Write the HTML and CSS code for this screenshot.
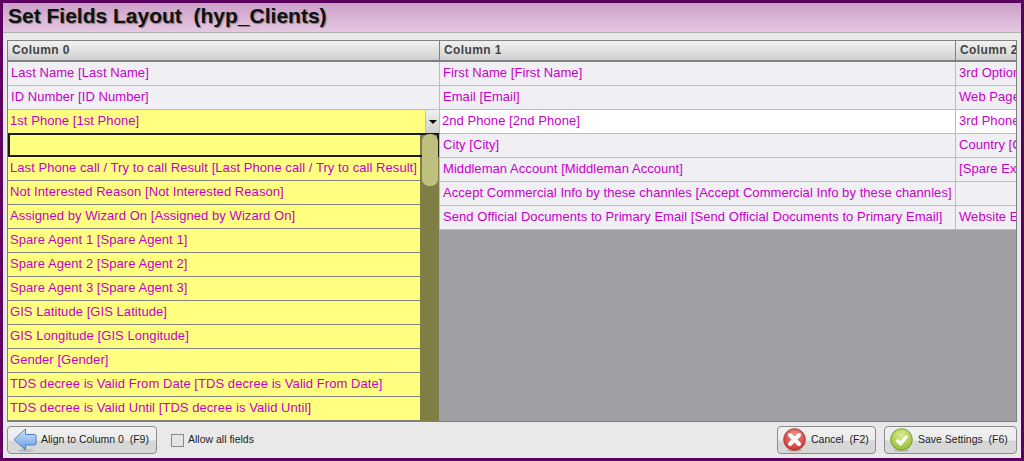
FILE: index.html
```html
<!DOCTYPE html>
<html lang="en">
<head>
<meta charset="utf-8">
<title>Set Fields Layout</title>
<link rel="stylesheet" href="styles.css">
</head>
<body>
<div class="window">
  <h1 class="title">Set Fields Layout&nbsp; (hyp_Clients)</h1>
  <main class="content">
    <div class="grid">
      <div class="row head">
        <div class="cell c0">Column 0</div>
        <div class="cell c1">Column 1</div>
        <div class="cell c2">Column 2</div>
      </div>
      <div class="row">
        <div class="cell c0">Last Name [Last Name]</div>
        <div class="cell c1">First Name [First Name]</div>
        <div class="cell c2">3rd Option [3rd Option]</div>
      </div>
      <div class="row">
        <div class="cell c0">ID Number [ID Number]</div>
        <div class="cell c1">Email [Email]</div>
        <div class="cell c2">Web Page [Web Page]</div>
      </div>
      <div class="row current">
        <div class="cell c0 combo"><span class="combo-text">1st Phone [1st Phone]</span><span class="combo-btn"><i class="arrow"></i></span></div>
        <div class="cell c1">2nd Phone [2nd Phone]</div>
        <div class="cell c2">3rd Phone [3rd Phone]</div>
      </div>
      <div class="row">
        <div class="cell c0"></div>
        <div class="cell c1">City [City]</div>
        <div class="cell c2">Country [Country]</div>
      </div>
      <div class="row">
        <div class="cell c0"></div>
        <div class="cell c1">Middleman Account [Middleman Account]</div>
        <div class="cell c2">[Spare Extra]</div>
      </div>
      <div class="row">
        <div class="cell c0"></div>
        <div class="cell c1">Accept Commercial Info by these channles [Accept Commercial Info by these channles]</div>
        <div class="cell c2"></div>
      </div>
      <div class="row">
        <div class="cell c0"></div>
        <div class="cell c1">Send Official Documents to Primary Email [Send Official Documents to Primary Email]</div>
        <div class="cell c2">Website Email</div>
      </div>
      <div class="dropdown">
        <div class="list">
          <div class="item selected"></div>
          <div class="item">Last Phone call / Try to call Result [Last Phone call / Try to call Result]</div>
          <div class="item">Not Interested Reason [Not Interested Reason]</div>
          <div class="item">Assigned by Wizard On [Assigned by Wizard On]</div>
          <div class="item">Spare Agent 1 [Spare Agent 1]</div>
          <div class="item">Spare Agent 2 [Spare Agent 2]</div>
          <div class="item">Spare Agent 3 [Spare Agent 3]</div>
          <div class="item">GIS Latitude [GIS Latitude]</div>
          <div class="item">GIS Longitude [GIS Longitude]</div>
          <div class="item">Gender [Gender]</div>
          <div class="item">TDS decree is Valid From Date [TDS decree is Valid From Date]</div>
          <div class="item">TDS decree is Valid Until [TDS decree is Valid Until]</div>
        </div>
        <div class="track"><div class="thumb"></div></div>
      </div>
    </div>
    <footer class="footer">
      <button class="btn align" type="button">
        <svg width="24" height="24" viewBox="0 0 24 24"><defs><linearGradient id="ga" x1="0" y1="0" x2="0" y2="1"><stop offset="0" stop-color="#d8e8fa"/><stop offset="1" stop-color="#5f9ae6"/></linearGradient></defs><ellipse cx="13" cy="22.5" rx="8" ry="1.4" fill="#bbb"/><path d="M1 11.5 L12.5 1 L12.5 6.5 L21.5 6.5 Q23 6.5 23 8 L23 15.5 Q23 17 21.5 17 L12.5 17 L12.5 22 Z" fill="url(#ga)" stroke="#4a7fc8"/></svg>
        <span class="label">Align to Column 0&nbsp; (F9)</span>
      </button>
      <label class="check"><span class="box"></span><span class="label">Allow all fields</span></label>
      <button class="btn cancel" type="button">
        <svg width="23" height="24" viewBox="0 0 23 24"><defs><radialGradient id="gr" cx="0.5" cy="0.3" r="0.75"><stop offset="0" stop-color="#f09088"/><stop offset="1" stop-color="#c8302c"/></radialGradient></defs><ellipse cx="11.5" cy="22.5" rx="8" ry="1.3" fill="#bbb"/><circle cx="11.5" cy="11.5" r="10.8" fill="url(#gr)" stroke="#a83a36"/><path d="M7 7 L16 16 M16 7 L7 16" stroke="#fff" stroke-width="4" stroke-linecap="round"/></svg>
        <span class="label">Cancel&nbsp; (F2)</span>
      </button>
      <button class="btn save" type="button">
        <svg width="23" height="24" viewBox="0 0 23 24"><defs><radialGradient id="gg" cx="0.5" cy="0.3" r="0.75"><stop offset="0" stop-color="#dcec90"/><stop offset="1" stop-color="#90b830"/></radialGradient></defs><ellipse cx="11.5" cy="22.5" rx="8" ry="1.3" fill="#bbb"/><circle cx="11.5" cy="11.5" r="10.8" fill="url(#gg)" stroke="#80a030"/><path d="M6.5 12 L10.5 15.5 L17 8" fill="none" stroke="#fff" stroke-width="3.4"/></svg>
        <span class="label">Save Settings&nbsp; (F6)</span>
      </button>
    </footer>
  </main>
</div>
</body>
</html>
```
FILE: styles.css
```css
* { box-sizing: border-box; }
html, body { margin: 0; height: 100%; overflow: hidden; }
body { font-family: "Liberation Sans", Arial, sans-serif; }
.window {
  width: 1024px; height: 461px;
  border: 3px solid #5c005f;
  background: #e9e9e9;
  display: flex; flex-direction: column;
}
.title {
  margin: 0; height: 30px; padding: 1px 0 0 5px;
  font-size: 21px; line-height: 24px; font-weight: bold; color: #111;
  background: linear-gradient(#cb9fc8, #e6c8e2);
  border-bottom: 1px solid #b0b0b0;
  text-shadow: 1px 1px 1px #777;
  white-space: pre;
}
.content { flex: 1; padding: 7px 4px 0 4px; display: flex; flex-direction: column; min-height: 0; }
.grid {
  position: relative; height: 382px; width: 1010px; overflow: hidden;
  border: 1px solid #808080; background: #a09fa4;
}
.row { display: flex; height: 24px; font-size: 13px; letter-spacing: 0.06px; line-height: 22px; color: #c800c8; }
.cell {
  flex: none; height: 24px; padding-left: 3px; overflow: hidden; white-space: nowrap;
  background: #efeff4;
  border-bottom: 1px solid #bcbcc4; border-right: 1px solid #bcbcc4;
}
.c0 { width: 432px; }
.c1 { width: 516px; }
.c2 { width: 62px; border-right: 0; }
.row.head { height: 21px; font-size: 12px; letter-spacing: 0.4px; }
.head .cell {
  height: 21px; padding-left: 4px; line-height: 19px; font-weight: bold; color: #444;
  background: linear-gradient(#f2f2f2, #cfcfcf);
  border-bottom: 2px solid #808080; border-right: 1px solid #808080;
}
.head .c2 { border-right: 0; }
.current .cell { background: #fff; }
.current .c1 { padding-left: 2px; }
.current .combo {
  display: flex; padding: 0 0 0 2px; background: #ffff80;
  border-bottom: 1px solid #333;
}
.combo-text { flex: 1; }
.combo-btn {
  width: 14px; flex: none; display: flex; align-items: center; justify-content: center;
  background: linear-gradient(#f0f0f0, #cfcfcf);
  border-left: 1px solid #c0c0c0;
}
.arrow { width: 0; height: 0; border: 4px solid transparent; border-top: 4px solid #000; border-bottom: 0; }
.dropdown {
  position: absolute; left: 0; top: 92px; width: 431px; height: 288px;
  display: flex; background: #ffff80;
}
.list { flex: 1; min-width: 0; }
.item {
  height: 24px; padding-left: 2px; font-size: 13px; letter-spacing: 0.06px; line-height: 21px; color: #c800c8;
  border-bottom: 1px solid #808080; white-space: nowrap;
}
.item.selected { border: 2px solid #1a1a1a; width: 431px; position: relative; z-index: 2; }
.track { width: 19px; flex: none; background: #7f7f45; padding: 1px 1px 0 2px; }
.thumb { position: relative; z-index: 3; height: 52px; border-radius: 7px; background: #bfbf80; }
.footer { display: flex; align-items: center; height: 36px; padding: 0; font-size: 10.5px; color: #222; }
.btn {
  display: flex; align-items: center; height: 28px; padding: 0 0 0 5px; gap: 4px; white-space: nowrap;
  font: 10.5px "Liberation Sans", Arial, sans-serif; color: #222;
  border: 1px solid #8c8c8c; border-radius: 4px;
  background: linear-gradient(#f0f0f0 0%, #ececec 50%, #d6d6d6 55%, #d8d8d8 100%);
}
.btn svg { flex: none; }
.label { padding-bottom: 2px; }
.align { width: 150px; }
.check { display: flex; align-items: center; gap: 4px; margin-left: 14px; margin-right: auto; }
.box { width: 13px; height: 13px; border: 1px solid #8a8a8a; background: #e4e4e4; }
.cancel { width: 99px; margin-right: 8px; gap: 5px; }
.save { width: 133px; gap: 5px; }
```
